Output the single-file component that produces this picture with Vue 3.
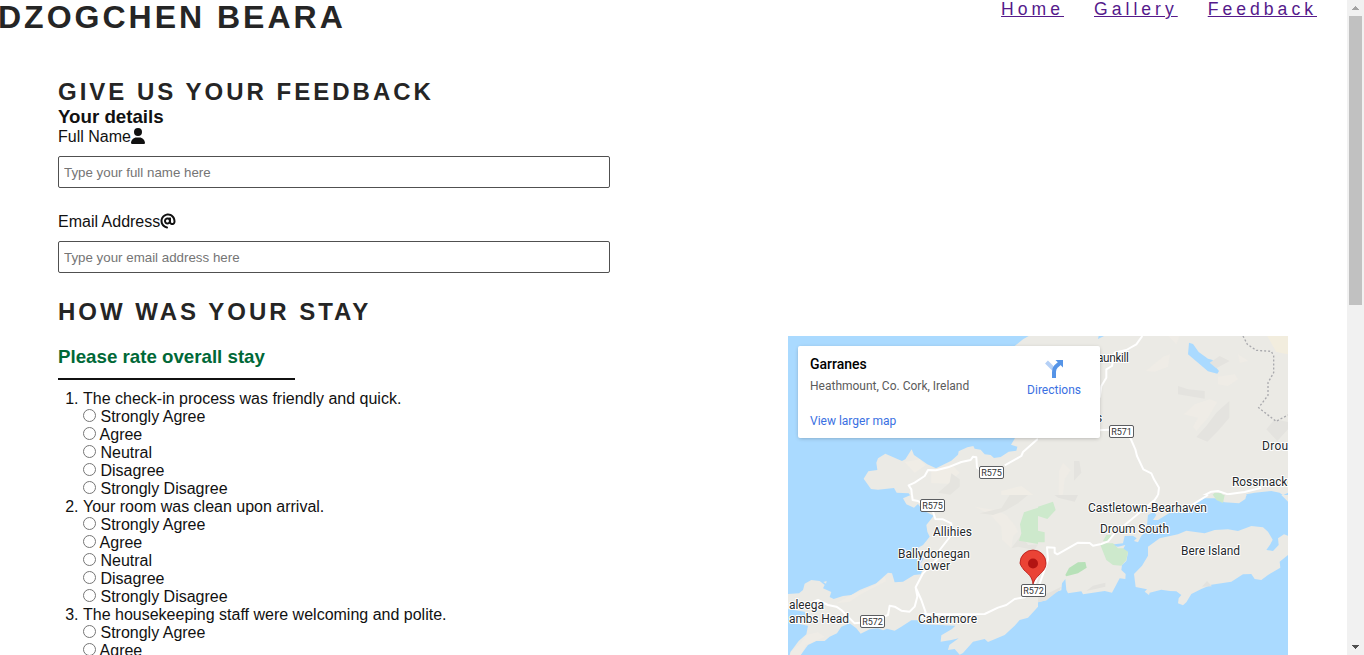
<script setup>
const links = ['Home', 'Gallery', 'Feedback']
const questions = [
  'The check-in process was friendly and quick.',
  'Your room was clean upon arrival.',
  'The housekeeping staff were welcoming and polite.',
]
const answers = ['Strongly Agree', 'Agree', 'Neutral', 'Disagree', 'Strongly Disagree']
const places = [
  { t: 'aunkill', x: 309, y: 26, w: 32 },
  { t: 's', x: 308, y: 86, w: 6 },
  { t: 'Droum', x: 474, y: 114.4, w: 37 },
  { t: 'Rossmackowen', x: 444, y: 150.4, w: 84 },
  { t: 'Castletown-Bearhaven', x: 300, y: 176.4, w: 119 },
  { t: 'Droum South', x: 312, y: 197.4, w: 69 },
  { t: 'Bere Island', x: 393, y: 219.4, w: 59 },
  { t: 'Allihies', x: 145, y: 200.4, w: 39 },
  { t: 'Ballydonegan', x: 110, y: 222.4, w: 72 },
  { t: 'Lower', x: 129, y: 234.4, w: 33 },
  { t: 'Cahermore', x: 130, y: 287.4, w: 59 },
  { t: 'aleega', x: 1, y: 273.4, w: 35 },
  { t: 'ambs Head', x: 1, y: 287.4, w: 60 },
]
const shields = [
  { t: 'R575', x: 191, y: 130 },
  { t: 'R571', x: 321, y: 89 },
  { t: 'R575', x: 132, y: 163 },
  { t: 'R572', x: 72, y: 279 },
  { t: 'R572', x: 233, y: 248 },
]
</script>

<template>
  <div class="page">
    <div class="content">
      <header>
        <h1>DZOGCHEN BEARA</h1>
        <nav><a v-for="l in links" :key="l" href="#">{{ l }}</a></nav>
      </header>
      <main>
        <form>
          <h2>GIVE US YOUR FEEDBACK</h2>
          <h3>Your details</h3>
          <label class="field">
            <span class="cap">Full Name<svg width="14" height="16" viewBox="0 0 448 512"><path fill="#111" d="M224 256A128 128 0 1 0 224 0a128 128 0 1 0 0 256zm-45.700 48C79.800 304 0 383.800 0 482.300C0 498.700 13.300 512 29.700 512H418.300c16.400 0 29.700-13.300 29.700-29.700C448 383.800 368.200 304 269.700 304H178.300z" /></svg></span>
            <input type="text" placeholder="Type your full name here">
          </label>
          <label class="field second">
            <span class="cap">Email Address<svg width="16" height="16" viewBox="0 0 512 512"><path fill="#111" d="M207.800 20.730c-93.450 18.320-168.700 93.660-187 187.100c-27.640 140.900 68.650 266.200 199.100 285.100c19.010 2.888 36.170-12.260 36.170-31.490l.0001-.6631c0-15.740-11.440-28.880-26.840-31.240c-84.350-12.980-149.200-86.130-149.200-174.200c0-102.900 88.610-185.500 193.400-175.400c91.540 8.869 158.600 91.250 158.600 183.200l0 16.160c0 22.090-17.940 40.050-40 40.050s-40.010-17.960-40.010-40.050v-120.100c0-8.847-7.161-16.020-16.010-16.020l-31.980 .0036c-7.299 0-13.200 4.992-15.120 11.680c-24.850-12.150-54.240-16.380-86.060-5.106c-38.750 13.730-68.120 48.910-73.720 89.640c-9.483 69.010 43.810 128 110.900 128c26.440 0 50.430-9.544 69.590-24.880c24 31.300 65.230 48.690 109.400 37.490C465.200 369.300 496 324.100 495.100 277.200V256.300C495.100 107.100 361.200-9.332 207.800 20.730zM239.100 304.300c-26.470 0-48-21.560-48-48.050s21.530-48.050 48-48.050s48 21.560 48 48.050S266.500 304.300 239.100 304.300z" /></svg></span>
            <input type="email" placeholder="Type your email address here">
          </label>
          <h2 class="stay">HOW WAS YOUR STAY</h2>
          <h3 class="rate">Please rate overall stay</h3>
          <ol>
            <li v-for="(q, i) in questions" :key="q">
              {{ q }}
              <div v-for="a in answers" :key="a"><input :id="`q${i}-${a}`" type="radio" :name="`q${i}`"> <label :for="`q${i}-${a}`">{{ a }}</label></div>
            </li>
          </ol>
        </form>
        <aside class="map">
          <svg class="terrain" width="500" height="319" viewBox="0 0 1500 957">
            <rect width="1500" height="957" fill="#aadaff" />
            <!-- north west -->
            <g>
              <path fill="#ebeae5" d="M750 0H722L705 10L680 30V308L669 326L688 332L685 344L662 347L638 363L618 366L608 357L590 355L578 341L560 338L556 330L538 334L512 346L510 356L490 374L444 397L418 385L378 357L371 340L352 370L342 375L292 353L270 367L265 380L268 402L241 406L227 428L249 459L270 461L318 456L326 470L362 472L368 480H750Z" />
              <path fill="#f0ede6" d="M430 405L490 385L515 410L480 443L430 441ZM350 378L395 370L413 388L380 410ZM640 465L700 450L740 480H640Z" />
              <path fill="#e5e4df" d="M490 412L515 430V452L487 476L450 470L485 440Z" />
              <path class="road" d="M750 308L705 348L700 360L650 388M575 400L567 395L565 364L555 362L548 372L520 378L480 394L444 403L420 402L410 420L380 440L362 448L370 460L372 480" />
            </g>
            <!-- north east -->
            <g transform="translate(750)">
              <path fill="#ebeae5" d="M0 0H750V470L735 478L725 470L700 465L650 470L625 475V480H0Z" />
              <path fill="#aadaff" d="M453 20L465 24L482 48L510 68L524 72L528 88L543 105L538 113L510 106L480 80L450 55ZM182 0H198L180 9Z" />
              <path fill="#efece6" d="M323 105L375 62L396 55L390 92L350 107ZM540 122L590 115L600 130L570 150L540 145ZM437 235L470 205L515 190L538 198L510 245L475 285L465 272L480 245ZM63 405L75 380L98 402L80 430L75 475L62 480ZM390 0H425L415 25ZM600 55L632 75L605 80Z" />
              <path fill="#e4e3df" d="M420 150L450 160L500 165V188L420 175ZM475 303L505 270L535 230L574 195V245L540 285L508 317ZM108 375H124L130 410L108 434ZM515 80L545 60L575 75L535 97ZM685 280L710 250L750 258V280L718 315Z" />
              <path fill="#f2edde" d="M688 0H750V55L715 48Z" />
              <path fill="none" stroke="#a9a9ad" stroke-width="4" stroke-dasharray="6 6" d="M615 0L628 25L655 43L700 46L707 60V110L690 140V178L662 215L714 256L750 237" />
              <path fill="#cde9cc" d="M520 480L530 470L550 472L558 480Z" />
              <path class="road" d="M313 0L295 25L265 42L230 50L222 90L205 100V125L190 150L185 185M180 283L250 280L278 308L292 340L297 360L316 400L340 412L348 430L363 455L360 480M495 480L520 467L540 465L570 475L620 468L670 455" />
            </g>
            <!-- south west -->
            <g transform="translate(0 477)">
              <path fill="#ebeae5" d="M368 0L345 10L355 28L378 38L390 27L403 45L437 62L415 90L418 110L425 125L405 150L388 160L390 185L408 190L397 207L405 222L398 238L378 240L345 260L320 262L312 235L300 233L265 265L215 285L190 300L165 303L137 312L125 306L130 291L105 280L110 270L95 258L70 255L50 266L45 285L33 295L0 297V342L50 350L55 367L0 380L60 392L55 418L32 438L8 470L5 480H38L60 450L85 438L110 438L125 425L147 415L160 395L185 385L205 400L218 416L245 403L270 400L285 406L297 401L320 407L340 395L370 376L390 376L400 388L455 390L502 392L492 402L460 421L458 440L490 435L512 430L484 450L480 465L500 462L515 479L525 474L555 440L590 432L600 441L650 420L680 392L695 375L720 368L750 335V0Z" />
              <path fill="#ebeae5" d="M106 261L116 258L114 266Z" />
              <path fill="#efece6" d="M190 300L260 270L290 245L295 258L220 297L185 320L145 325ZM560 35L620 45L655 60L680 90L690 110L675 125L670 160L642 135L640 95L605 58ZM30 455L55 420L90 412L110 425L60 448ZM8 470L40 442L55 450L38 480H8Z" />
              <path fill="#e5e4df" d="M575 55L640 40L665 0H720L690 25L650 48L615 60ZM670 160L700 120L720 150L750 148L740 165L690 155Z" />
              <path fill="#cde9cc" d="M708 52L750 38V147L693 137L700 115L696 88Z" />
              <path class="road" d="M372 0L374 15L390 18L435 50L442 72L465 73L490 85V120L455 165L460 180L405 235L383 277L400 315L413 352L400 370M383 277L388 305L380 335L365 350L340 347L320 335L305 332L300 360L250 380L200 385L160 345L145 335L120 330L90 315L65 325M410 358L590 357L630 338L655 330L680 312L710 307L740 270L750 240" />
            </g>
            <!-- south east -->
            <g transform="translate(750 477)">
              <path fill="#ebeae5" d="M0 0V322L25 316L50 292L70 286L72 265L82 252L85 285L90 295L130 289L135 298L200 288L222 293L245 250L262 252L263 237L250 225L252 210L265 198L270 172L255 163L262 150L240 155L210 150L255 145L260 123L285 122L296 130L288 138L300 142L310 122L325 110L330 60L347 50L355 60L345 75L360 75L393 55L430 50L460 30L500 10L530 10L560 22L603 25L622 12L625 0ZM730 0H750V20Z" />
              <path fill="#ebeae5" d="M330 155L365 130L420 118L445 107L500 115L530 105L570 103L600 108L640 93L675 97L690 110L704 134L697 148L685 165L705 168L722 150L720 130L738 118L750 122V180L725 200L727 218L690 240L670 255L650 252L640 237L615 238L580 260L520 269L490 282L460 297L445 322L435 331L420 325L422 310L430 300L415 289L395 288L370 284L335 293L333 300L320 290L327 283L293 276L288 237L312 212L330 182Z" />
              <path fill="#cde9cc" d="M0 35L45 20L53 45L28 72L0 63ZM0 107L20 112V142H0ZM185 145H225L240 160L255 160L270 170L265 195L250 212L225 210L205 195ZM195 138L205 120H220L212 140ZM525 0H560L555 24L535 15Z" />
              <path fill="#b7e1b8" d="M82 240L93 219L120 202L142 201L146 218L120 235L85 244Z" />
              <path fill="#e3e2de" d="M145 288L165 272L202 263V275ZM492 275L507 258L522 274ZM0 305L40 290L70 275L65 285L25 316L0 322ZM120 0L110 20L60 8L50 0Z" />
              <path class="road" d="M0 280L30 195L27 157L50 158V173L58 178L120 143L155 144L165 152L190 147L210 139L230 115L290 65L350 15L360 0M350 15L340 45M430 52L470 25L510 0" />
            </g>
          </svg>
          <svg class="labels" width="500" height="319">
            <g class="places">
              <text v-for="p in places" :key="p.t" :x="p.x" :y="p.y" :textLength="p.w">{{ p.t }}</text>
            </g>
            <path fill="#ea4335" stroke="#b31412" stroke-width=".8" d="M245 248C244 240 240 238 236 234C233 230 232 228 232 227A13 13 0 0 1 258 227C258 233 254 236 251 239C247 243 246 245 245 248Z" />
            <circle cx="245" cy="227.500" r="5" fill="#b31412" />
            <g v-for="(s, i) in shields" :key="i" class="shield">
              <rect :x="s.x + .5" :y="s.y + .5" width="24" height="12" rx="1.500" />
              <text :x="s.x + 2.300" :y="s.y + 10" textLength="20.500">{{ s.t }}</text>
            </g>
          </svg>
          <div class="card">
            <div class="info">
              <strong>Garranes</strong>
              <p>Heathmount, Co. Cork, Ireland</p>
              <a>View larger map</a>
            </div>
            <div class="directions">
              <svg width="22" height="22" viewBox="0 0 22 22"><path d="M3.500 5L11 12.500" fill="none" stroke="#b5d0f6" stroke-width="4" /><path d="M11 21V15Q11 11.500 13 9.500L17 6" fill="none" stroke="#5594e7" stroke-width="4" /><path d="M12.500 3H20V10.500Z" fill="#5594e7" /></svg>
              <span>Directions</span>
            </div>
          </div>
        </aside>
      </main>
    </div>
    <div class="scrollbar">
      <svg width="17" height="16" shape-rendering="crispEdges"><path d="M5 10H12V9H11V8H10V7H9V6H8V7H7V8H6V9H5Z" fill="#a3a3a3" /></svg>
      <div class="thumb"></div>
      <svg width="17" height="17" shape-rendering="crispEdges"><path d="M5 7H12V8H11V9H10V10H9V11H8V10H7V9H6V8H5Z" fill="#505050" /></svg>
    </div>
  </div>
</template>

<style>
body { background: #fff; overflow: hidden; }
</style>

<style scoped>
* { box-sizing: border-box; margin: 0; padding: 0; }
.page { display: flex; height: 655px; overflow: hidden; font: 16px "Liberation Sans", Arial, sans-serif; color: #111; }
.content { flex: 1; overflow: hidden; }
header { display: flex; justify-content: space-between; height: 78px; padding-right: 30px; }
h1 { font-size: 32px; line-height: 34px; letter-spacing: 3px; color: #252525; margin-left: -2px; }
nav { display: flex; gap: 30px; font-size: 17.6px; line-height: 18px; letter-spacing: 4px; }
nav a { color: #551a8b; }
main { display: flex; justify-content: space-between; padding: 0 59px 0 58px; }
form { width: 552px; }
h2 { font-size: 24px; line-height: 27px; letter-spacing: 3px; color: #252525; }
h3 { font-size: 18.72px; line-height: 23px; }
.field { display: block; }
.cap { display: block; height: 18px; line-height: 18px; margin-bottom: 10px; }
.cap svg { vertical-align: -2px; }
.field input { display: block; width: 552px; height: 32px; border: 1px solid #505050; border-radius: 2px; padding: 0 5px; font: 13.333px "Liberation Sans", Arial, sans-serif; background: #fff; }
.field input::placeholder { color: #757575; }
.second { margin-top: 25px; }
.stay { margin-top: 25px; }
.rate { width: 237px; height: 35px; margin-top: 20px; border-bottom: 2px solid #111; color: #006837; }
ol { padding-left: 25px; margin-top: 10px; line-height: 18px; }
li div { height: 18px; }
li input { margin: 0; width: 13px; height: 13px; }
.map { position: relative; width: 500px; height: 319px; margin-top: 258px; overflow: hidden; font-family: Roboto, sans-serif; }
.terrain { display: block; }
.road { fill: none; stroke: #fff; stroke-width: 6; stroke-linejoin: round; }
.labels { position: absolute; left: 0; top: 0; }
.places text { font-size: 12px; fill: #25282b; stroke: #fff; stroke-width: 2px; stroke-linejoin: round; paint-order: stroke; }
.shield rect { fill: #fff; stroke: #5b5d60; }
.shield text { font-size: 9px; fill: #333; }
.card { position: absolute; left: 10px; top: 10px; width: 302px; height: 92px; display: flex; justify-content: space-between; padding: 10px 19px 0 12px; background: #fff; border-radius: 2px; box-shadow: 0 1px 4px -1px rgba(0, 0, 0, .3); font-size: 12px; }
.info strong { display: block; font-size: 14px; font-weight: 500; line-height: 16px; color: #000; }
.info p { margin-top: 6px; line-height: 16px; color: #5b5b5b; }
.info a { display: block; margin-top: 19px; line-height: 16px; color: #3a70e2; }
.directions { display: flex; flex-direction: column; align-items: center; line-height: 16px; color: #3a70e2; }
.directions svg { margin: 1px 0 3px; }
.scrollbar { width: 17px; background: #f1f1f1; display: flex; flex-direction: column; }
.scrollbar svg { display: block; }
.thumb { width: 13px; height: 289px; margin: 0 2px auto; background: #c1c1c1; }
</style>
